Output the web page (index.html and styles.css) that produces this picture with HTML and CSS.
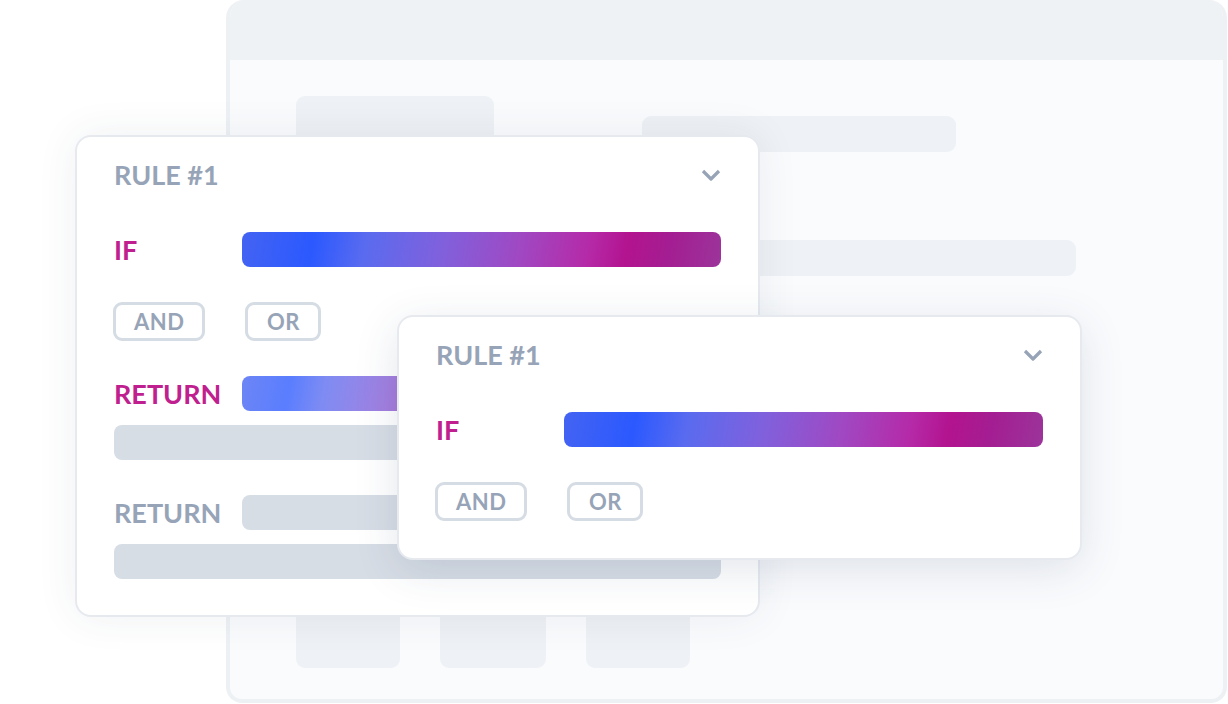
FILE: index.html
```html
<!DOCTYPE html>
<html lang="en">
<head>
    <meta charset="UTF-8">
    <meta name="viewport" content="width=device-width, initial-scale=1.0">
    <title>Rules</title>
    <link rel="stylesheet" href="styles.css">
</head>
<body>
<div class="stage">
    <!-- Background app window (skeleton) -->
    <div class="window">
        <div class="window-bar"></div>
        <div class="window-body">
            <div class="sk-row">
                <div class="sk sk-a"></div>
                <div class="sk sk-b"></div>
            </div>
            <div class="sk sk-c"></div>
            <div class="sk-row sk-bottom">
                <div class="sk sk-tile"></div>
                <div class="sk sk-tile wide"></div>
                <div class="sk sk-tile"></div>
            </div>
        </div>
    </div>

    <!-- Rule card, full -->
    <div class="card card-back">
        <div class="card-head">
            <span class="title">RULE #1</span>
            <svg class="chevron" viewBox="0 0 20 12"><path d="M2 2 L10 10 L18 2"/></svg>
        </div>
        <div class="card-body">
            <div class="row">
                <span class="label hot">IF</span>
                <div class="bar gradient"></div>
            </div>
            <div class="ops">
                <span class="op">AND</span>
                <span class="op">OR</span>
            </div>
            <div class="group">
                <div class="row">
                    <span class="label hot">RETURN</span>
                    <div class="bar gradient short"></div>
                </div>
                <div class="bar grey"></div>
            </div>
            <div class="group">
                <div class="row">
                    <span class="label">RETURN</span>
                    <div class="bar grey"></div>
                </div>
                <div class="bar grey"></div>
            </div>
        </div>
    </div>

    <!-- Rule card, front -->
    <div class="card card-front">
        <div class="card-head">
            <span class="title">RULE #1</span>
            <svg class="chevron" viewBox="0 0 20 12"><path d="M2 2 L10 10 L18 2"/></svg>
        </div>
        <div class="card-body">
            <div class="row">
                <span class="label hot">IF</span>
                <div class="bar gradient"></div>
            </div>
            <div class="ops">
                <span class="op">AND</span>
                <span class="op">OR</span>
            </div>
        </div>
    </div>
</div>
</body>
</html>
```

FILE: styles.css
```css
body {
    margin: 0;
    background: #fff;
    font-family: 'Lato', 'Open Sans', sans-serif;
}

.stage {
    position: relative;
    width: 1228px;
    height: 704px;
    overflow: hidden;
}

/* Background window */
.window {
    position: absolute;
    left: 226px;
    top: 0;
    width: 1001px;
    height: 703px;
    box-sizing: border-box;
    border: 4px solid #eef1f4;
    border-top: none;
    border-radius: 18px 18px 16px 16px;
    background: #fafbfd;
    display: flex;
    flex-direction: column;
    overflow: hidden;
}

.window-bar {
    height: 60px;
    background: #eff2f5;
    flex-shrink: 0;
}

.window-body {
    flex: 1;
    display: flex;
    flex-direction: column;
    padding: 36px 0 31px 66px;
}

.sk {
    background: #eef1f5;
    border-radius: 9px;
}

.sk-row {
    display: flex;
    align-items: flex-start;
}

.sk-a {
    width: 198px;
    height: 70px;
}

.sk-b {
    width: 314px;
    height: 36px;
    margin: 20px 0 0 148px;
}

.sk-c {
    width: 780px;
    height: 36px;
    margin-top: 74px;
}

.sk-bottom {
    margin-top: auto;
    gap: 40px;
}

.sk-tile {
    width: 104px;
    height: 70px;
}

.sk-tile.wide {
    width: 106px;
}

/* Rule cards */
.card {
    position: absolute;
    width: 685px;
    box-sizing: border-box;
    background: #fff;
    border: 2px solid #e6eaef;
    border-radius: 16px;
    padding: 20px 37px 37px 37px;
}

.card-back {
    left: 75px;
    top: 135px;
    height: 482px;
    box-shadow: 0 0 40px rgba(40, 60, 90, 0.08);
}

.card-front {
    left: 397px;
    top: 315px;
    height: 245px;
    box-shadow: 0 10px 44px rgba(40, 60, 100, 0.13);
}

.card-head {
    display: flex;
    justify-content: space-between;
    align-items: center;
    height: 35px;
    margin-bottom: 40px;
}

.title,
.label {
    font-size: 27px;
    line-height: 35px;
    font-weight: 700;
    color: #97a4b7;
}

.chevron {
    width: 20px;
    height: 12px;
    fill: none;
    stroke: #97a4b7;
    stroke-width: 3.2;
    stroke-linejoin: round;
}

.card-body {
    display: flex;
    flex-direction: column;
    gap: 35px;
}

.group {
    display: flex;
    flex-direction: column;
    gap: 14px;
}

.row {
    display: grid;
    grid-template-columns: 128px 1fr;
    align-items: center;
}

.label.hot {
    color: #bf1f8f;
}

.bar {
    height: 35px;
    border-radius: 8px;
}

.bar.grey {
    background: #d7dde5;
}

.bar.gradient {
    background: linear-gradient(100deg, #4463f2 0%, #2b59ff 15%, #5a6bef 26%, #8160dc 42%, #a048c2 58%, #b52aa8 72%, #b3138f 80%, #a31e92 89%, #9c349b 100%);
}

.bar.short {
    width: 320px;
    opacity: 0.78;
}

.ops {
    display: flex;
    gap: 40px;
    margin-left: -1px;
}

.op {
    height: 39px;
    min-width: 76px;
    box-sizing: border-box;
    padding: 0 18px;
    border: 3px solid #d5dce4;
    border-radius: 9px;
    font-size: 22px;
    line-height: 33px;
    font-weight: 700;
    letter-spacing: 0.5px;
    text-align: center;
    color: #97a4b7;
}
```
